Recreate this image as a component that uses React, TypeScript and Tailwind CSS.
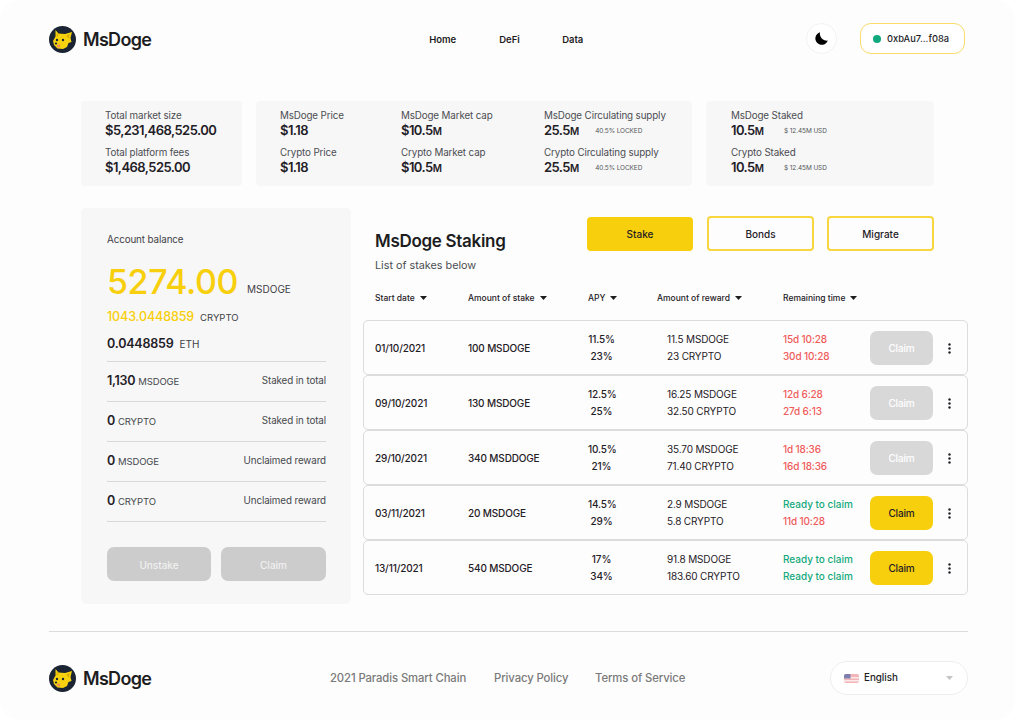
const font = "font-['Inter','Liberation_Sans',sans-serif]";

function DogLogo() {
  return (
    <svg width="27" height="27" viewBox="0 0 27 27" className="shrink-0">
      <circle cx="13.5" cy="13.5" r="13.5" fill="#1b2433" />
      <path
        d="M6.5 4 L9.5 7.5 L16 8 L23 6 L21.5 12 L22.5 16 L19.5 17 L18 21 L14 23 L8.5 22.5 L5 19 L4 15 L6.5 10.5 Z"
        fill="#f5d20d"
      />
      <path d="M8 6.5 L9.5 9.5 L7.5 10.5 Z M21 8 L19.5 12.5 L17.5 9.8 Z" fill="#d9a90a" />
      <circle cx="8" cy="14" r="1.2" fill="#1b2433" />
      <circle cx="14" cy="14" r="1.2" fill="#1b2433" />
      <ellipse cx="7" cy="17.5" rx="1.2" ry="0.9" fill="#1b2433" />
      <path d="M7.8 19 Q9.5 18.5 11.5 18.5 L10.5 21.5 L8.5 21.2 Z" fill="#ef8a5a" />
    </svg>
  );
}

function Brand() {
  return (
    <div className="mt-[1px] flex items-center gap-[7px]">
      <DogLogo />
      <span className="text-[18px] font-semibold leading-none tracking-[-0.7px] text-[#1d1d1f]">MsDoge</span>
    </div>
  );
}

function Caret({ className = "fill-[#1d1d1f]" }: { className?: string }) {
  return (
    <svg width="7" height="4" viewBox="0 0 7 4" className={className}>
      <path d="M0 0 H7 L3.5 4 Z" />
    </svg>
  );
}

function Stat({ label, value, unit, note, noteGap = "ml-[16px]" }: { label: string; value: string; unit?: string; note?: string; noteGap?: string }) {
  return (
    <div className="h-[37px] whitespace-nowrap pt-[2px]">
      <div className="text-[9.8px] leading-[13px] tracking-[-0.12px] text-[#4b4d52]">{label}</div>
      <div className="flex h-[19px] items-center text-[#1f2026]">
        <span className="text-[13px] font-semibold tracking-[-0.55px]">{value}</span>
        {unit ? <span className="text-[10px] font-semibold">{unit}</span> : null}
        {note ? <span className={`${noteGap} mt-[2px] text-[6.5px] tracking-[-0.1px] text-[#55575c]`}>{note}</span> : null}
      </div>
    </div>
  );
}

function BalanceRow({ value, unit, label }: { value: string; unit: string; label: string }) {
  return (
    <div className="flex h-[40px] items-center justify-between border-b border-[#d8d8d8] pt-[1px]">
      <div className="flex items-baseline gap-[3px]">
        <span className="text-[12.5px] font-semibold tracking-[-0.3px] text-[#1f2026]">{value}</span>
        <span className="text-[9.5px] tracking-[-0.1px] text-[#45474c]">{unit}</span>
      </div>
      <span className="text-[9.8px] tracking-[-0.1px] text-[#45474c]">{label}</span>
    </div>
  );
}

type Stake = {
  date: string;
  amount: string;
  apy: string[];
  reward: string[];
  time: string[];
  ready: boolean;
};

const stakes: Stake[] = [
  { date: "01/10/2021", amount: "100 MSDOGE", apy: ["11.5%", "23%"], reward: ["11.5 MSDOGE", "23 CRYPTO"], time: ["15d 10:28", "30d 10:28"], ready: false },
  { date: "09/10/2021", amount: "130 MSDOGE", apy: ["12.5%", "25%"], reward: ["16.25 MSDOGE", "32.50 CRYPTO"], time: ["12d 6:28", "27d 6:13"], ready: false },
  { date: "29/10/2021", amount: "340 MSDDOGE", apy: ["10.5%", "21%"], reward: ["35.70 MSDOGE", "71.40 CRYPTO"], time: ["1d 18:36", "16d 18:36"], ready: false },
  { date: "03/11/2021", amount: "20 MSDOGE", apy: ["14.5%", "29%"], reward: ["2.9 MSDOGE", "5.8 CRYPTO"], time: ["Ready to claim", "11d 10:28"], ready: true },
  { date: "13/11/2021", amount: "540 MSDOGE", apy: ["17%", "34%"], reward: ["91.8 MSDOGE", "183.60 CRYPTO"], time: ["Ready to claim", "Ready to claim"], ready: true },
];

const columns = [
  { name: "Start date", width: "w-[93px]" },
  { name: "Amount of stake", width: "w-[120px]" },
  { name: "APY", width: "w-[69px]" },
  { name: "Amount of reward", width: "w-[126px]" },
  { name: "Remaining time", width: "" },
];

function StakeRow({ stake }: { stake: Stake }) {
  return (
    <div className="flex h-[55px] items-center rounded-[5px] border border-[#dcdcdc] pl-[11px] text-[10px] tracking-[-0.15px] text-[#1f2026]">
      <div className="w-[93px] pt-[2px] font-medium">{stake.date}</div>
      <div className="w-[120px] pt-[2px] font-medium">{stake.amount}</div>
      <div className="w-[79px]">
        <div className="w-[27px] text-center font-medium leading-[17px]">
          <div className="whitespace-nowrap">{stake.apy[0]}</div>
          <div>{stake.apy[1]}</div>
        </div>
      </div>
      <div className="w-[116px] leading-[17px]">
        <div>{stake.reward[0]}</div>
        <div>{stake.reward[1]}</div>
      </div>
      <div className="w-[87px] font-medium leading-[17px]">
        {stake.time.map((t, i) => (
          <div key={i} className={t === "Ready to claim" ? "tracking-[-0.02px] text-[#13a97c]" : "text-[#ef5b5b]"}>{t}</div>
        ))}
      </div>
      <button
        className={`h-[34px] w-[63px] rounded-[7px] pt-[2px] text-[10px] font-medium ${stake.ready ? "bg-[#f7cf0c] text-[#1f2026]" : "bg-[#d8d8d8] text-white"}`}
      >
        Claim
      </button>
      <div className="flex flex-1 justify-center pr-[2px] pt-[2px]">
        <svg width="3" height="11" viewBox="0 0 3 11" className="fill-[#1f2026]">
          <circle cx="1.5" cy="1.5" r="1.2" />
          <circle cx="1.5" cy="5.5" r="1.2" />
          <circle cx="1.5" cy="9.5" r="1.2" />
        </svg>
      </div>
    </div>
  );
}

export default function App() {
  return (
    <div className={`${font} h-[720px] w-[1015px] overflow-hidden rounded-[20px] bg-[#fdfdfd] antialiased`}>
      {/* top bar */}
      <header className="flex h-[78px] items-center pl-[49px] pr-[50px]">
        <Brand />
        <nav className="ml-[278px] mt-[2px] flex items-center text-[9.5px] font-semibold text-[#1d1d1f]">
          <span className="w-[70px]">Home</span>
          <span className="w-[63px]">DeFi</span>
          <span>Data</span>
        </nav>
        <div className="ml-auto -mt-[1px] flex items-center gap-[23px]">
          <div className="flex h-[31px] w-[31px] items-center justify-center rounded-full border border-[#f2f2f2] bg-white">
            <svg width="13" height="13" viewBox="0 0 13 13">
              <path d="M5 0.3 A6.4 6.4 0 1 0 12.8 8.6 A7 7 0 0 1 5 0.3 Z" fill="#000" />
            </svg>
          </div>
          <div className="flex h-[31px] w-[105px] items-center gap-[6px] rounded-[11px] border-[1.5px] border-[#f9dc6a] bg-white pl-[12px]">
            <span className="h-[8px] w-[8px] rounded-full bg-[#0fa97d]" />
            <span className="pt-[1px] text-[9.3px] font-medium text-[#1d1d1f]">0xbAu7...f08a</span>
          </div>
        </div>
      </header>

      {/* stats */}
      <section className="mt-[23px] ml-[81px] flex gap-[14px]">
        <div className="flex h-[85px] w-[161px] flex-col justify-center rounded-[4px] bg-[#f7f7f7] pl-[24px]">
          <Stat label="Total market size" value="$5,231,468,525.00" />
          <Stat label="Total platform fees" value="$1,468,525.00" />
        </div>
        <div className="flex h-[85px] w-[436px] items-center rounded-[4px] bg-[#f7f7f7] pl-[24px]">
          <div className="w-[121px]">
            <Stat label="MsDoge Price" value="$1.18" />
            <Stat label="Crypto Price" value="$1.18" />
          </div>
          <div className="w-[143px]">
            <Stat label="MsDoge Market cap" value="$10.5" unit="M" />
            <Stat label="Crypto Market cap" value="$10.5" unit="M" />
          </div>
          <div>
            <Stat label="MsDoge Circulating supply" value="25.5" unit="M" note="40.5% LOCKED" />
            <Stat label="Crypto Circulating supply" value="25.5" unit="M" note="40.5% LOCKED" />
          </div>
        </div>
        <div className="flex h-[85px] w-[228px] flex-col justify-center rounded-[4px] bg-[#f7f7f7] pl-[25px]">
          <Stat label="MsDoge Staked" value="10.5" unit="M" note="$ 12.45M USD" noteGap="ml-[20px]" />
          <Stat label="Crypto Staked" value="10.5" unit="M" note="$ 12.45M USD" noteGap="ml-[20px]" />
        </div>
      </section>

      {/* main */}
      <main className="mt-[22px] ml-[81px] flex gap-[12px]">
        <aside className="h-[396px] w-[270px] rounded-[5px] bg-[#f7f7f7] pl-[26px] pr-[25px] pt-[25px]">
          <div className="text-[9.8px] leading-[13px] tracking-[-0.1px] text-[#3f4146]">Account balance</div>
          <div className="mt-[15px] flex items-baseline gap-[9px]">
            <span className="text-[34px] font-medium leading-[42px] tracking-[-0.4px] text-[#f7cf0c]">5274.00</span>
            <span className="-translate-y-[1px] text-[10px] text-[#3f4146]">MSDOGE</span>
          </div>
          <div className="mt-[5px] flex items-baseline gap-[6px]">
            <span className="text-[12.5px] font-medium tracking-[-0.1px] text-[#f7cf0c]">1043.0448859</span>
            <span className="text-[9.5px] text-[#3f4146]">CRYPTO</span>
          </div>
          <div className="mt-[8px] flex h-[26px] items-baseline gap-[6px]">
            <span className="text-[12.5px] font-semibold tracking-[-0.2px] text-[#1f2026]">0.0448859</span>
            <span className="text-[10px] text-[#3f4146]">ETH</span>
          </div>
          <div className="border-t border-[#d8d8d8]">
            <BalanceRow value="1,130" unit="MSDOGE" label="Staked in total" />
            <BalanceRow value="0" unit="CRYPTO" label="Staked in total" />
            <BalanceRow value="0" unit="MSDOGE" label="Unclaimed reward" />
            <BalanceRow value="0" unit="CRYPTO" label="Unclaimed reward" />
          </div>
          <div className="mt-[25px] flex gap-[10px]">
            <button className="h-[34px] w-[104px] rounded-[7px] bg-[#cccccc] pt-[3px] text-[10px] font-medium text-[#f0f0f0]">Unstake</button>
            <button className="h-[34px] w-[105px] rounded-[7px] bg-[#cccccc] pt-[3px] text-[10px] font-medium text-[#f0f0f0]">Claim</button>
          </div>
        </aside>

        <div className="w-[605px]">
          <div className="flex h-[84px]">
            <div className="ml-[12px] w-[212px] pt-[22px]">
              <h1 className="text-[17px] font-semibold leading-[22px] tracking-[-0.3px] text-[#1d1d1f]">MsDoge Staking</h1>
              <p className="mt-[7px] text-[10.8px] leading-[14px] text-[#4b4d52]">List of stakes below</p>
            </div>
            <div className="flex items-start pt-[8px]">
              <button className="mt-px h-[34px] w-[106px] rounded-[4px] bg-[#f7cf0c] pt-[1px] text-[10px] font-medium text-[#1f2026]">Stake</button>
              <button className="ml-[14px] h-[35px] w-[107px] rounded-[4px] border-2 border-[#f8d63f] pt-[1px] text-[10px] font-medium text-[#1f2026]">Bonds</button>
              <button className="ml-[13px] h-[35px] w-[107px] rounded-[4px] border-2 border-[#f8d63f] pt-[1px] text-[10px] font-medium text-[#1f2026]">Migrate</button>
            </div>
          </div>
          <div className="ml-[12px] flex h-[28px] items-start text-[8.5px] font-medium text-[#1f2026]">
            {columns.map((c) => (
              <div key={c.name} className={`flex h-[12px] items-center gap-[5px] ${c.width}`}>
                <span className="whitespace-nowrap">{c.name}</span>
                <Caret />
              </div>
            ))}
          </div>
          <div>
            {stakes.map((s) => (
              <StakeRow key={s.date} stake={s} />
            ))}
          </div>
        </div>
      </main>

      {/* footer */}
      <footer className="ml-[49px] mr-[47px] mt-[27px] border-t border-[#dcdcdc]">
        <div className="flex items-center pt-[29px]">
          <div className="w-[281px]">
            <Brand />
          </div>
          <div className="flex text-[11.3px] font-medium tracking-[-0.1px] text-[#7a7a7a]">
            <span className="w-[164px]">2021 Paradis Smart Chain</span>
            <span className="w-[101px]">Privacy Policy</span>
            <span>Terms of Service</span>
          </div>
          <div className="ml-auto flex h-[34px] w-[138px] items-center rounded-full border border-[#eeeeee] bg-white pl-[13px] pr-[14px]">
            <svg width="15" height="9" viewBox="0 0 15 9" className="rounded-[2px]">
              <rect width="15" height="9" fill="#f3b5b8" />
              <rect y="3" width="15" height="1.5" fill="#fbe9ea" />
              <rect y="6" width="15" height="1.5" fill="#fbe9ea" />
              <rect width="6.5" height="4.5" fill="#7c7fb0" />
            </svg>
            <span className="ml-[5px] pt-[1px] text-[9.8px] font-medium text-[#1d1d1f]">English</span>
            <Caret className="ml-auto fill-[#c4c4c4]" />
          </div>
        </div>
      </footer>
    </div>
  );
}
